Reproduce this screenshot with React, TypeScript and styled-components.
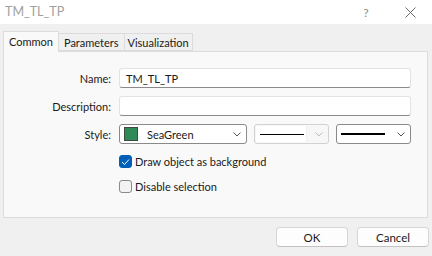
import React from "react";
import styled, { createGlobalStyle } from "styled-components";

const GlobalStyle = createGlobalStyle`
  html, body {
    margin: 0;
    padding: 0;
    background: #f0f0f0;
  }
  body {
    font-family: "Segoe UI", Lato, "Noto Sans", sans-serif;
    font-size: 11px;
    color: #1a1a1a;
  }
`;

const Window = styled.div`
  width: 432px;
  height: 256px;
  display: flex;
  flex-direction: column;
  background: #f0f0f0;
  overflow: hidden;
`;

const TitleBar = styled.div`
  height: 24px;
  background: #ffffff;
  display: flex;
  align-items: center;
  padding-left: 5px;
  color: #a0a0a0;
  font-size: 12.5px;
`;

const Title = styled.span`
  flex: 1;
  padding-bottom: 2px;
`;

const TitleButton = styled.div`
  width: 44px;
  height: 24px;
  display: flex;
  align-items: center;
  justify-content: center;
  color: #8a8a8a;
  font-size: 12px;
`;

const Body = styled.div`
  flex: 1;
  display: flex;
  flex-direction: column;
  padding: 7px 4px 0 3px;
`;

const TabRow = styled.div`
  display: flex;
  align-items: flex-end;
  height: 20px;
  position: relative;
  z-index: 1;
`;

const Tab = styled.div<{ $active?: boolean; $pad: number }>`
  box-sizing: border-box;
  height: ${(p) => (p.$active ? "21px" : "18px")};
  margin-bottom: ${(p) => (p.$active ? "-1px" : "0")};
  padding: 0 ${(p) => p.$pad}px;
  display: flex;
  align-items: center;
  border: 1px solid #dcdcdc;
  border-bottom: ${(p) => (p.$active ? "none" : "1px solid #dcdcdc")};
  margin-left: ${(p) => (p.$active ? "0" : "-1px")};
  background: ${(p) => (p.$active ? "#f9f9f9" : "#f0f0f0")};
  color: #1a1a1a;
  padding-bottom: ${(p) => (p.$active ? "2px" : "0")};
`;

const Panel = styled.div`
  box-sizing: border-box;
  height: 167px;
  background: #f9f9f9;
  border: 1px solid #dcdcdc;
  padding: 16px 16px 0 0;
  display: grid;
  grid-template-columns: 107px 1fr;
  column-gap: 8px;
  grid-auto-rows: min-content;
`;

const Label = styled.div`
  height: 20px;
  display: flex;
  align-items: center;
  justify-content: flex-end;
  margin-bottom: 8px;
`;

const TextBox = styled.div`
  box-sizing: border-box;
  height: 20px;
  margin-bottom: 8px;
  background: #ffffff;
  border: 1px solid #e3e3e3;
  border-bottom-color: #8a8a8a;
  border-radius: 3px;
  padding: 0 6px;
  display: flex;
  align-items: center;
`;

const StyleRow = styled.div`
  display: flex;
  gap: 7px;
  height: 20px;
  margin-bottom: 11px;
`;

const Combo = styled.div<{ $width: number; $disabled?: boolean }>`
  box-sizing: border-box;
  width: ${(p) => p.$width}px;
  height: 20px;
  display: flex;
  align-items: center;
  background: ${(p) => (p.$disabled ? "#f7f7f7" : "#ffffff")};
  border: 1px solid ${(p) => (p.$disabled ? "#d2d2d2" : "#8a8a8a")};
  border-radius: 3px;
  padding: 0 5px 0 4px;
`;

const ComboValue = styled.div<{ $boxed?: boolean }>`
  flex: 1;
  height: 100%;
  display: flex;
  align-items: center;
  gap: 9px;
  ${(p) =>
    p.$boxed &&
    `
    background: #ffffff;
    margin: 1px 8px 1px -3px;
    height: 16px;
    padding-left: 4px;
    border-right: 1px solid #f0f0f0;
  `}
`;

const Swatch = styled.div`
  width: 12px;
  height: 12px;
  background: #2e8b57;
  border: 1px solid #3c4a40;
`;

const LineSample = styled.div<{ $thick: number; $width: number }>`
  width: ${(p) => p.$width}px;
  height: ${(p) => p.$thick}px;
  background: #000000;
`;

const CheckRow = styled.label`
  grid-column: 2;
  display: flex;
  align-items: center;
  gap: 3px;
  height: 13px;
  margin-bottom: 12px;
`;

const Box = styled.div<{ $checked?: boolean }>`
  box-sizing: border-box;
  width: 13px;
  height: 13px;
  border-radius: 3px;
  background: ${(p) => (p.$checked ? "#005fb8" : "#f3f3f3")};
  border: 1px solid ${(p) => (p.$checked ? "#005fb8" : "#8a8a8a")};
  display: flex;
  align-items: center;
  justify-content: center;
`;

const Footer = styled.div`
  display: flex;
  justify-content: flex-end;
  gap: 9px;
  padding-top: 9px;
  margin-right: -1px;
`;

const Button = styled.div`
  box-sizing: border-box;
  width: 72px;
  height: 20px;
  background: #fdfdfd;
  border: 1px solid #d5d5d5;
  border-bottom-color: #c2c2c2;
  border-radius: 4px;
  display: flex;
  align-items: center;
  justify-content: center;
  font-size: 11.5px;
`;

const Chevron = ({ color }: { color: string }) => (
  <svg width="8" height="5" viewBox="0 0 8 5">
    <path d="M0.5 0.5 L4 4 L7.5 0.5" fill="none" stroke={color} strokeWidth="1" />
  </svg>
);

export default function App() {
  return (
    <>
      <GlobalStyle />
      <Window>
        <TitleBar>
          <Title>TM_TL_TP</Title>
          <TitleButton>?</TitleButton>
          <TitleButton>
            <svg width="11" height="11" viewBox="0 0 11 11">
              <path d="M0.5 0.5 L10.5 10.5 M10.5 0.5 L0.5 10.5" stroke="#6a6a6a" strokeWidth="1" />
            </svg>
          </TitleButton>
        </TitleBar>
        <Body>
          <TabRow>
            <Tab $active $pad={5}>Common</Tab>
            <Tab $pad={5}>Parameters</Tab>
            <Tab $pad={3}>Visualization</Tab>
          </TabRow>
          <Panel>
            <Label>Name:</Label>
            <TextBox>TM_TL_TP</TextBox>
            <Label>Description:</Label>
            <TextBox />
            <Label>Style:</Label>
            <StyleRow>
              <Combo $width={128}>
                <ComboValue>
                  <Swatch />
                  SeaGreen
                </ComboValue>
                <Chevron color="#555" />
              </Combo>
              <Combo $width={75} $disabled>
                <ComboValue $boxed>
                  <LineSample $thick={1} $width={44} />
                </ComboValue>
                <Chevron color="#bbb" />
              </Combo>
              <Combo $width={75}>
                <ComboValue>
                  <LineSample $thick={2} $width={44} />
                </ComboValue>
                <Chevron color="#555" />
              </Combo>
            </StyleRow>
            <CheckRow>
              <Box $checked>
                <svg width="9" height="8" viewBox="0 0 9 8">
                  <path d="M1 4 L3.5 6.5 L8 1.5" fill="none" stroke="#fff" strokeWidth="1" />
                </svg>
              </Box>
              Draw object as background
            </CheckRow>
            <CheckRow>
              <Box />
              Disable selection
            </CheckRow>
          </Panel>
          <Footer>
            <Button>OK</Button>
            <Button>Cancel</Button>
          </Footer>
        </Body>
      </Window>
    </>
  );
}
